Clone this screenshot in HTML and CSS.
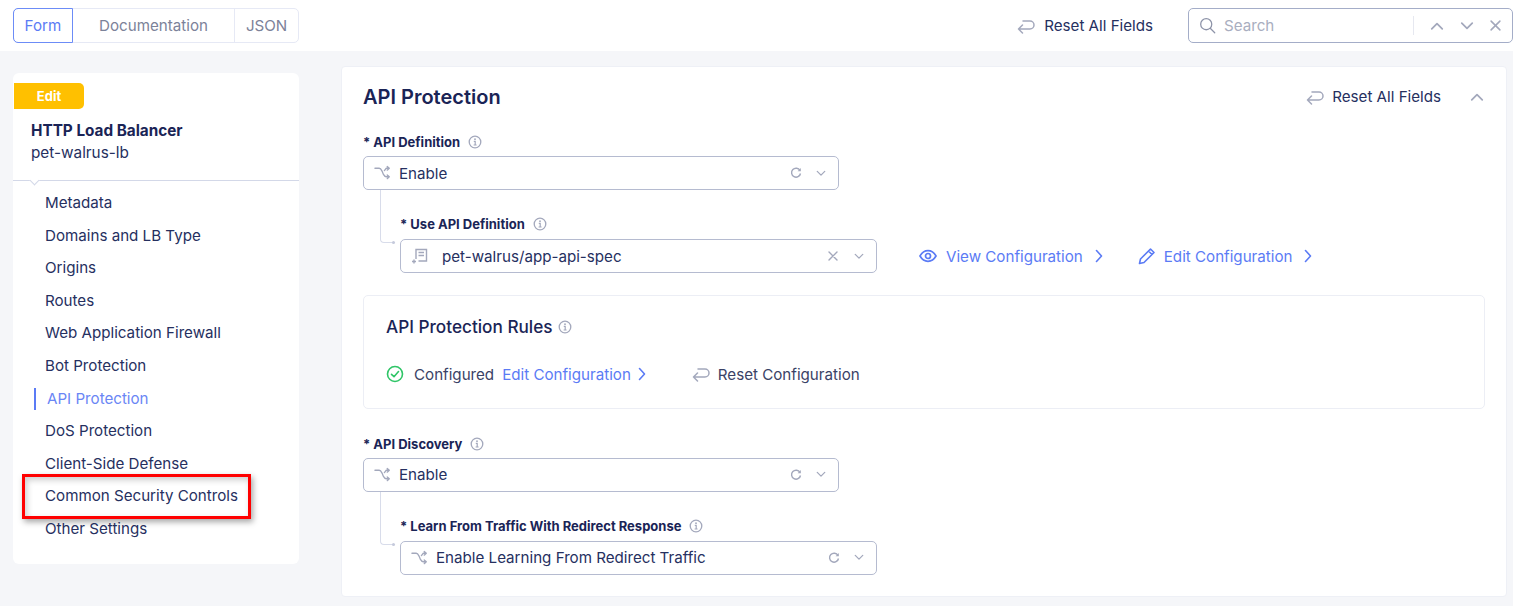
FILE: index.html
```html
<!DOCTYPE html>
<html>
<head>
  <title>HTTP Load Balancer</title>
  <link rel="stylesheet" href="styles.css">
</head>
<body>
  <svg class="icon-defs" width="0" height="0">
    <symbol id="i-reset" viewBox="0 0 18 16"><path d="M5.5 15 1.5 11l4-4M1.5 11h11.5a3.9 3.9 0 0 0 0-8H6" fill="none" stroke="currentColor" stroke-width="1.5" stroke-linecap="round" stroke-linejoin="round"/></symbol>
    <symbol id="i-info" viewBox="0 0 14 14"><circle cx="7" cy="7" r="5.8" fill="none" stroke="currentColor" stroke-width="1.3"/><path d="M5.8 6.4H7.2V10M5.6 10H8.6" fill="none" stroke="currentColor" stroke-width="1.2"/><circle cx="7" cy="4.2" r=".9" fill="currentColor"/></symbol>
    <symbol id="i-split" viewBox="0 0 18 16"><path d="M1 3H5.5C7 3 7.5 4 8.5 6L10 9.5C10.8 11 11.5 12 13 12H16M14 10l2.2 2L14 14M11 5.5 13 3H16M14 1l2.2 2L14 5" fill="none" stroke="currentColor" stroke-width="1.4" stroke-linecap="round" stroke-linejoin="round"/></symbol>
    <symbol id="i-refresh" viewBox="0 0 12 12"><path d="M10 3.5A4.5 4.5 0 1 0 10.5 6.5" fill="none" stroke="currentColor" stroke-width="1.4"/><path d="M10.8 1V4.2H7.6z" fill="currentColor"/></symbol>
    <symbol id="i-down" viewBox="0 0 12 8"><path d="M1.5 1.5 6 6l4.500-4.500" fill="none" stroke="currentColor" stroke-width="1.5" stroke-linecap="round" stroke-linejoin="round"/></symbol>
    <symbol id="i-up" viewBox="0 0 12 8"><path d="M1.5 6.5 6 2l4.500 4.500" fill="none" stroke="currentColor" stroke-width="1.5" stroke-linecap="round" stroke-linejoin="round"/></symbol>
    <symbol id="i-right" viewBox="0 0 8 14"><path d="M1.5 1.5 6.5 7l-5 5.500" fill="none" stroke="currentColor" stroke-width="1.6" stroke-linecap="round" stroke-linejoin="round"/></symbol>
    <symbol id="i-close" viewBox="0 0 10 10"><path d="M1 1 9 9M9 1 1 9" fill="none" stroke="currentColor" stroke-width="1.4" stroke-linecap="round"/></symbol>
  </svg>

  <!-- top bar -->
  <header class="topbar">
    <div class="tabs">
      <button class="tab tab-form active">Form</button>
      <button class="tab tab-doc">Documentation</button>
      <button class="tab tab-json">JSON</button>
    </div>
    <div class="top-actions">
      <a class="reset-link"><svg class="ic-reset"><use href="#i-reset"/></svg>Reset All Fields</a>
      <div class="search">
        <svg class="ic-search" viewBox="0 0 20 20"><circle cx="8.5" cy="8.5" r="6.5" fill="none" stroke="currentColor" stroke-width="1.5"/><path d="M13.5 13.5 18.5 18.5" stroke="currentColor" stroke-width="1.5" stroke-linecap="round"/></svg>
        <span class="search-text">Search</span>
        <span class="search-sep"></span>
        <svg class="ic-nav"><use href="#i-up"/></svg>
        <svg class="ic-nav"><use href="#i-down"/></svg>
        <svg class="ic-x"><use href="#i-close"/></svg>
      </div>
    </div>
  </header>

  <div class="content">
    <!-- left nav -->
    <aside class="sidebar">
      <span class="badge">Edit</span>
      <div class="side-title">HTTP Load Balancer</div>
      <div class="side-name">pet-walrus-lb</div>
      <div class="side-divider"></div>
      <ul class="side-nav">
        <li>Metadata</li>
        <li>Domains and LB Type</li>
        <li>Origins</li>
        <li>Routes</li>
        <li>Web Application Firewall</li>
        <li>Bot Protection</li>
        <li class="current">API Protection</li>
        <li>DoS Protection</li>
        <li>Client-Side Defense</li>
        <li class="marked">Common Security Controls</li>
        <li>Other Settings</li>
      </ul>
    </aside>

    <!-- form -->
    <main class="panel">
      <div class="panel-head">
        <h2>API Protection</h2>
        <a class="reset-link head-reset"><svg class="ic-reset"><use href="#i-reset"/></svg>Reset All Fields</a>
        <svg class="ic-collapse"><use href="#i-up"/></svg>
      </div>

      <div class="field-label">* API Definition <svg class="ic-info"><use href="#i-info"/></svg></div>
      <div class="select">
        <svg class="ic-split"><use href="#i-split"/></svg>
        <span class="select-text">Enable</span>
        <svg class="ic-refresh"><use href="#i-refresh"/></svg>
        <svg class="ic-down"><use href="#i-down"/></svg>
      </div>
      <div class="nested">
        <div class="field-label">* Use API Definition <svg class="ic-info"><use href="#i-info"/></svg></div>
        <div class="nested-row">
          <div class="select">
            <svg class="ic-spec" viewBox="0 0 18 18"><path d="M5 12V2.500H15.500V14H7.500M7.500 5.500H13M7.500 8.500H13M1 14.500H5M3 12.500V16.500" fill="none" stroke="currentColor" stroke-width="1.4"/></svg>
            <span class="select-text spec-text">pet-walrus/app-api-spec</span>
            <svg class="ic-clear"><use href="#i-close"/></svg>
            <svg class="ic-down"><use href="#i-down"/></svg>
          </div>
          <a class="cfg-link view-link">
            <svg class="ic-eye" viewBox="0 0 18 14"><path d="M1 7C3 3.5 5.800 1.700 9 1.700S15 3.500 17 7C15 10.500 12.200 12.300 9 12.300S3 10.500 1 7Z" fill="none" stroke="currentColor" stroke-width="1.7"/><circle cx="9" cy="7" r="2.500" fill="none" stroke="currentColor" stroke-width="1.7"/></svg>
            View Configuration
            <svg class="ic-right"><use href="#i-right"/></svg>
          </a>
          <a class="cfg-link">
            <svg class="ic-pencil" viewBox="0 0 18 18"><path d="M1.500 16.500 2.500 12 12.500 2 16 5.500 6 15.500ZM10.500 4 14 7.500" fill="none" stroke="currentColor" stroke-width="1.600" stroke-linejoin="round"/></svg>
            Edit Configuration
            <svg class="ic-right"><use href="#i-right"/></svg>
          </a>
        </div>
      </div>

      <section class="rules">
        <div class="rules-title">API Protection Rules <svg class="ic-info-sm"><use href="#i-info"/></svg></div>
        <div class="rules-row">
          <svg class="ic-ok" viewBox="0 0 18 18"><circle cx="9" cy="9" r="7.500" fill="none" stroke="currentColor" stroke-width="1.600"/><path d="M5.500 9.300 8 11.700 12.500 6.500" fill="none" stroke="currentColor" stroke-width="1.600" stroke-linecap="round" stroke-linejoin="round"/></svg>
          <span class="configured">Configured</span>
          <a class="cfg-link">Edit Configuration <svg class="ic-right"><use href="#i-right"/></svg></a>
          <a class="reset-link rules-reset"><svg class="ic-reset"><use href="#i-reset"/></svg>Reset Configuration</a>
        </div>
      </section>

      <div class="field-label">* API Discovery <svg class="ic-info"><use href="#i-info"/></svg></div>
      <div class="select">
        <svg class="ic-split"><use href="#i-split"/></svg>
        <span class="select-text">Enable</span>
        <svg class="ic-refresh"><use href="#i-refresh"/></svg>
        <svg class="ic-down"><use href="#i-down"/></svg>
      </div>
      <div class="nested">
        <div class="field-label">* Learn From Traffic With Redirect Response <svg class="ic-info"><use href="#i-info"/></svg></div>
        <div class="select">
          <svg class="ic-split"><use href="#i-split"/></svg>
          <span class="select-text">Enable Learning From Redirect Traffic</span>
          <svg class="ic-refresh"><use href="#i-refresh"/></svg>
          <svg class="ic-down"><use href="#i-down"/></svg>
        </div>
      </div>
    </main>
  </div>
</body>
</html>
```

FILE: styles.css
```css
*, *::before, *::after {
  box-sizing: border-box;
}

html, body {
  height: 606px;
  overflow: hidden;
}

body {
  margin: 0;
  font-family: Inter, "Liberation Sans", sans-serif;
  font-size: 15.15px;
  color: #26305f;
  background-color: #f5f6f9;
}

svg {
  flex: none;
}

.icon-defs {
  position: absolute;
}

/* top bar */
.topbar {
  height: 51px;
  padding: 8px 0 8px 13px;
  background-color: #fff;
  display: flex;
  justify-content: space-between;
}

.tabs {
  display: flex;
  width: 286px;
  height: 35px;
  border: 1px solid #e6e9f5;
  border-radius: 5px;
}

.tab {
  height: 35px;
  margin: -1px 0;
  padding: 0;
  font: inherit;
  color: #7c8299;
  background: none;
  border: none;
  border-right: 1px solid #e6e9f5;
}

.tab-form {
  width: 60px;
  margin-left: -1px;
  color: #5b7bf5;
  border: 1px solid #6c8cf7;
  border-radius: 5px 0 0 5px;
}

.tab-doc {
  width: 163px;
}

.tab-json {
  width: 63px;
  border-right: none;
}

.top-actions {
  display: flex;
  align-items: center;
}

.reset-link {
  display: flex;
  align-items: center;
  color: #26305f;
}

.ic-reset {
  width: 18px;
  height: 16px;
  margin-right: 9px;
  color: #a3a8bc;
}

.search {
  width: 325px;
  height: 35px;
  margin-left: 35px;
  padding: 0 11px 0 10px;
  display: flex;
  align-items: center;
  border: 1px solid #a4adc8;
  border-radius: 5px;
}

.ic-search {
  width: 17px;
  height: 17px;
  color: #8d93a8;
}

.search-text {
  margin-left: 8px;
  flex: 1;
  color: #a9aec0;
}

.search-sep {
  width: 1px;
  height: 19px;
  margin-right: 16px;
  background-color: #e6e8f0;
}

.ic-nav {
  width: 14px;
  height: 10px;
  margin-right: 16px;
  color: #a3a8bc;
}

.ic-x {
  width: 11px;
  height: 11px;
  color: #a3a8bc;
}

.content {
  display: flex;
  align-items: flex-start;
  padding: 15px 6px 0 13px;
}

/* left nav */
.sidebar {
  position: relative;
  width: 286px;
  height: 491px;
  margin-top: 7px;
  padding-top: 10px;
  background-color: #fff;
  border-radius: 6px;
}

.badge {
  display: block;
  width: 70px;
  height: 26px;
  margin-left: 1px;
  font-size: 13px;
  font-weight: 700;
  line-height: 26px;
  text-align: center;
  color: #fff;
  background-color: #ffc000;
  border-radius: 0 5px 5px 0;
}

.side-title {
  margin: 12px 0 0 18px;
  font-size: 15.3px;
  font-weight: 700;
  line-height: 20px;
  color: #1a2456;
}

.side-name {
  margin: 2px 0 0 18px;
  font-size: 15.3px;
  line-height: 20px;
}

.side-divider {
  position: relative;
  height: 1px;
  margin-top: 17px;
  background-color: #d3d8e8;
}

.side-divider::after {
  content: "";
  position: absolute;
  left: 18px;
  top: -3px;
  width: 7px;
  height: 7px;
  background-color: #fff;
  border-right: 1px solid #d3d8e8;
  border-bottom: 1px solid #d3d8e8;
  transform: rotate(45deg);
}

.side-nav {
  list-style-type: none;
  margin: 6px 0 0;
  padding: 0 0 0 32px;
}

.side-nav li {
  position: relative;
  height: 32.6px;
  line-height: 32.6px;
}

.side-nav .current {
  color: #6a86f5;
  padding-left: 2px;
}

.side-nav .current::before {
  content: "";
  position: absolute;
  left: -11px;
  top: 5px;
  width: 2px;
  height: 22px;
  background-color: #5b7bf5;
}

/* red call-out drawn over the screenshot */
.side-nav .marked::after {
  content: "";
  position: absolute;
  left: -23px;
  top: -6px;
  width: 229px;
  height: 45px;
  border: 3px solid #f00;
  box-shadow: 2px 3px 6px rgba(0, 0, 0, .35), inset 2px 3px 6px rgba(0, 0, 0, .2);
}

/* form panel */
.panel {
  width: 1166px;
  height: 531px;
  margin-left: 42px;
  padding: 0 22px 0 21px;
  background-color: #fff;
  border: 1px solid #eef0f6;
  border-radius: 4px;
  overflow: hidden;
}

.panel-head {
  height: 65px;
  padding-bottom: 6px;
  display: flex;
  align-items: center;
}

.panel-head h2 {
  flex: 1;
  margin: 0;
  font-size: 20px;
  font-weight: 600;
  color: #1a2456;
}

.head-reset .ic-reset {
  margin-right: 8px;
}

.ic-collapse {
  width: 14px;
  height: 10px;
  margin-left: 29px;
  color: #a3a8bc;
}

.field-label {
  height: 20px;
  display: flex;
  align-items: center;
  font-size: 13px;
  font-weight: 700;
  line-height: 20px;
  color: #1a2456;
}

.ic-info {
  width: 14px;
  height: 14px;
  margin-left: 8px;
  color: #a3a8bc;
}

.select {
  width: 476px;
  height: 34px;
  margin-top: 4px;
  padding: 0 10px;
  display: flex;
  align-items: center;
  background-color: #fff;
  border: 1px solid #b5bbd0;
  border-radius: 5px;
}

.ic-split {
  width: 17px;
  height: 16px;
  color: #a3a8bc;
}

.select-text {
  flex: 1;
  margin-left: 8px;
}

.spec-text {
  margin-left: 13px;
}

.ic-spec {
  width: 18px;
  height: 18px;
  color: #a3a8bc;
}

.ic-refresh {
  width: 12px;
  height: 12px;
  margin-right: 14px;
  color: #a3a8bc;
}

.ic-clear {
  width: 10px;
  height: 10px;
  margin-right: 16px;
  color: #a3a8bc;
}

.ic-down {
  width: 10px;
  height: 7px;
  margin-right: 2px;
  color: #a3a8bc;
}

.nested {
  position: relative;
  margin-top: 24px;
  padding-left: 37px;
}

.nested .select {
  width: 477px;
  margin-top: 5px;
}

/* connector from the parent select down to the child */
.nested::before {
  content: "";
  position: absolute;
  left: 17px;
  top: -24px;
  width: 13px;
  height: 53px;
  border-left: 1px solid #d8dcea;
  border-bottom: 1px solid #d8dcea;
  border-bottom-left-radius: 4px;
}

.nested::after {
  content: "";
  position: absolute;
  left: 29px;
  top: 27px;
  width: 3px;
  height: 3px;
  border-radius: 50%;
  background-color: #c5cadc;
}

.nested-row {
  display: flex;
  align-items: center;
}

.cfg-link {
  display: flex;
  align-items: center;
  color: #5b7bf5;
  white-space: nowrap;
}

.nested-row .cfg-link {
  margin-top: 5px;
}

.nested-row .view-link {
  margin-left: 42px;
  margin-right: 35px;
}

.ic-eye {
  width: 18px;
  height: 14px;
  margin-right: 9px;
}

.ic-pencil {
  width: 18px;
  height: 18px;
  margin-right: 8px;
}

.ic-right {
  width: 8px;
  height: 14px;
  margin-left: 12px;
}

.rules {
  width: 1122px;
  height: 114px;
  margin: 22px 0 24.5px;
  padding: 21px 22px 0;
  border: 1px solid #eceef5;
  border-radius: 5px;
}

.rules-title {
  display: flex;
  align-items: center;
  font-size: 17.2px;
  font-weight: 500;
  line-height: 20px;
  color: #1a2456;
}

.ic-info-sm {
  width: 14px;
  height: 14px;
  margin-left: 5px;
  color: #a3a8bc;
}

.rules-row {
  display: flex;
  align-items: center;
  margin-top: 27px;
  height: 20px;
}

.ic-ok {
  width: 18px;
  height: 18px;
  color: #2fc567;
}

.configured {
  margin: 0 8px 0 10px;
  color: #3a4266;
}

.rules-row .ic-right {
  margin-left: 7px;
}

.rules-reset {
  margin-left: 46px;
  color: #3a4266;
}

.rules-reset .ic-reset {
  margin-right: 8px;
}
```
